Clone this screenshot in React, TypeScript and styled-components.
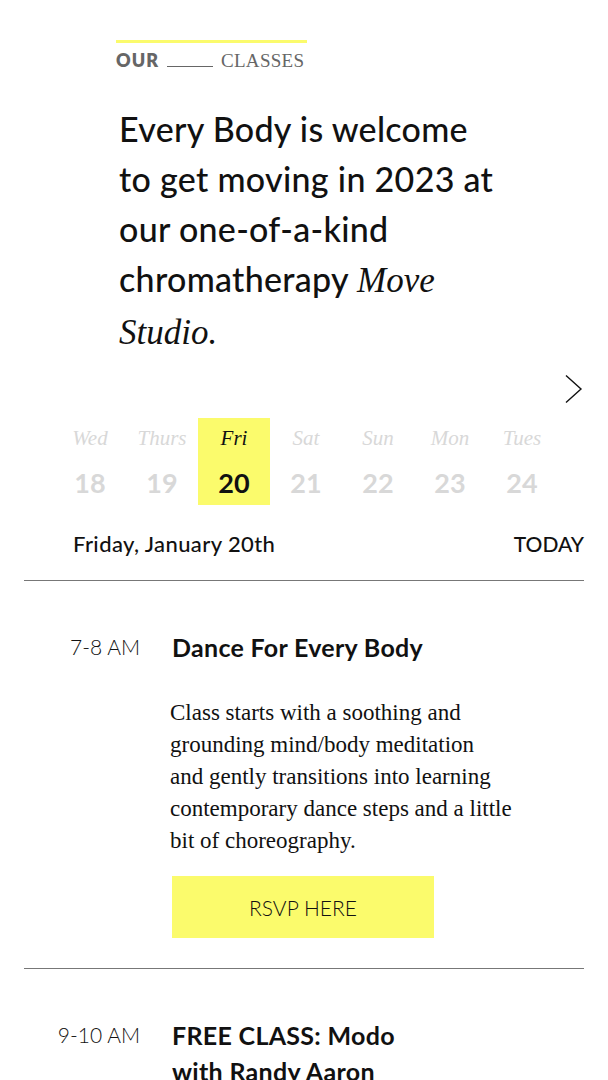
import React from 'react';
import styled, { createGlobalStyle } from 'styled-components';

const yellow = '#fbfb6c';
const sans = `Lato, 'Noto Sans', sans-serif`;
const serif = `'Liberation Serif', 'Times New Roman', serif`;

type Day = { name: string; date: number };

const days: Day[] = [
  { name: 'Wed', date: 18 },
  { name: 'Thurs', date: 19 },
  { name: 'Fri', date: 20 },
  { name: 'Sat', date: 21 },
  { name: 'Sun', date: 22 },
  { name: 'Mon', date: 23 },
  { name: 'Tues', date: 24 },
];

type ClassItem = {
  time: string;
  title: string;
  description?: string[];
};

const classes: ClassItem[] = [
  {
    time: '7-8 AM',
    title: 'Dance For Every Body',
    description: [
      'Class starts with a soothing and',
      'grounding mind/body meditation',
      'and gently transitions into learning',
      'contemporary dance steps and a little',
      'bit of choreography.',
    ],
  },
  {
    time: '9-10 AM',
    title: 'FREE CLASS: Modo with Randy Aaron',
  },
];

const GlobalStyle = createGlobalStyle`
  body {
    margin: 0;
    background: #fff;
    font-family: ${sans};
    color: #111;
  }
`;

const App = () => {
  const selected = 20;
  return (
    <>
      <GlobalStyle />
      <Page>
        <Intro>
          <Eyebrow>
            <EyebrowSans>OUR</EyebrowSans>
            <Blank />
            <EyebrowSerif>CLASSES</EyebrowSerif>
          </Eyebrow>
          <Headline>
            <Line>Every Body is welcome</Line>
            <Line>to get moving in 2023 at</Line>
            <Line>our one-of-a-kind</Line>
            <Line>
              chromatherapy <em>Move</em>
            </Line>
            <Line>
              <em>Studio.</em>
            </Line>
          </Headline>
        </Intro>

        <NavRow>
          <svg width="20" height="30" viewBox="0 0 20 30" fill="none">
            <path d="M2 1.5 L17 15 L2 28.5" stroke="#111" strokeWidth="1.4" />
          </svg>
        </NavRow>

        <DayGrid>
          {days.map(d => (
            <DayCell key={d.date} active={d.date === selected}>
              <DayName>{d.name}</DayName>
              <DayNumber>{d.date}</DayNumber>
            </DayCell>
          ))}
        </DayGrid>

        <DateRow>
          <DateLabel>Friday, January 20th</DateLabel>
          <TodayLabel>TODAY</TodayLabel>
        </DateRow>

        {classes.map(c => (
          <ClassRow key={c.time}>
            <Time>{c.time}</Time>
            <ClassBody>
              <ClassTitle>{c.title}</ClassTitle>
              {c.description && (
                <>
                  <Description>
                    {c.description.map(l => (
                      <Line key={l}>{l}</Line>
                    ))}
                  </Description>
                  <RsvpButton>RSVP HERE</RsvpButton>
                </>
              )}
            </ClassBody>
          </ClassRow>
        ))}
      </Page>
    </>
  );
};

const Page = styled.div`
  padding: 0 24px;
  height: 1080px;
  overflow: hidden;
`;

const Intro = styled.section`
  padding: 40px 0 0 92px;
`;

const Eyebrow = styled.div`
  display: flex;
  align-items: baseline;
  width: 191px;
  border-top: 3px solid ${yellow};
  padding-top: 6px;
  color: #666;
`;

const EyebrowSans = styled.span`
  font-family: ${sans};
  font-weight: 800;
  font-size: 18px;
  letter-spacing: 1px;
`;

const Blank = styled.span`
  display: inline-block;
  width: 46px;
  margin: 0 8px;
  border-bottom: 1px solid #666;
`;

const EyebrowSerif = styled.span`
  font-family: ${serif};
  font-size: 19px;
  letter-spacing: 0.3px;
`;

const Headline = styled.h1`
  margin: 32px 0 0 3px;
  font-family: ${sans};
  font-weight: 500;
  font-size: 34px;
  line-height: 50px;
  letter-spacing: 0.3px;
  color: #111;

  em {
    font-family: ${serif};
    font-size: 35px;
    letter-spacing: 0;
  }
`;

const Line = styled.span`
  display: block;
  white-space: nowrap;
`;

const NavRow = styled.div`
  display: flex;
  justify-content: flex-end;
  margin-top: 16px;
`;

const DayGrid = styled.div`
  display: grid;
  grid-template-columns: repeat(7, 72px);
  margin: 14px 0 0 30px;
`;

const DayCell = styled.div<{ active?: boolean }>`
  display: flex;
  flex-direction: column;
  align-items: center;
  height: 87px;
  background: ${p => (p.active ? yellow : 'transparent')};
  color: ${p => (p.active ? '#111' : '#d8d8d8')};
`;

const DayName = styled.div`
  margin-top: 8px;
  font-family: ${serif};
  font-style: italic;
  font-size: 21px;
  line-height: 24px;
`;

const DayNumber = styled.div`
  margin-top: 18px;
  font-family: ${sans};
  font-weight: 700;
  font-size: 27px;
  line-height: 30px;
`;

const DateRow = styled.div`
  display: flex;
  justify-content: space-between;
  align-items: baseline;
  padding: 25px 0 23px 49px;
  border-bottom: 1px solid #777;
`;

const DateLabel = styled.div`
  font-size: 22px;
  font-weight: 500;
  letter-spacing: 0.4px;
`;

const TodayLabel = styled.div`
  font-size: 21px;
  font-weight: 500;
`;

const ClassRow = styled.div`
  display: grid;
  grid-template-columns: 116px 1fr;
  column-gap: 32px;
  padding: 48px 0 30px;
  border-bottom: 1px solid #777;
`;

const Time = styled.div`
  text-align: right;
  font-size: 21px;
  font-weight: 300;
  line-height: 36px;
`;

const ClassBody = styled.div`
  display: flex;
  flex-direction: column;
  align-items: flex-start;
`;

const ClassTitle = styled.h2`
  margin: 0;
  width: 266px;
  font-size: 25px;
  font-weight: 700;
  line-height: 36px;
  letter-spacing: 0.3px;
`;

const Description = styled.p`
  margin: 32px 0 0 -2px;
  font-family: ${serif};
  font-size: 23px;
  line-height: 32px;
  color: #111;
`;

const RsvpButton = styled.button`
  margin-top: 19px;
  width: 262px;
  height: 62px;
  border: none;
  background: ${yellow};
  font-family: ${sans};
  font-size: 21px;
  font-weight: 300;
  color: #111;
  cursor: pointer;
`;

export default App;
